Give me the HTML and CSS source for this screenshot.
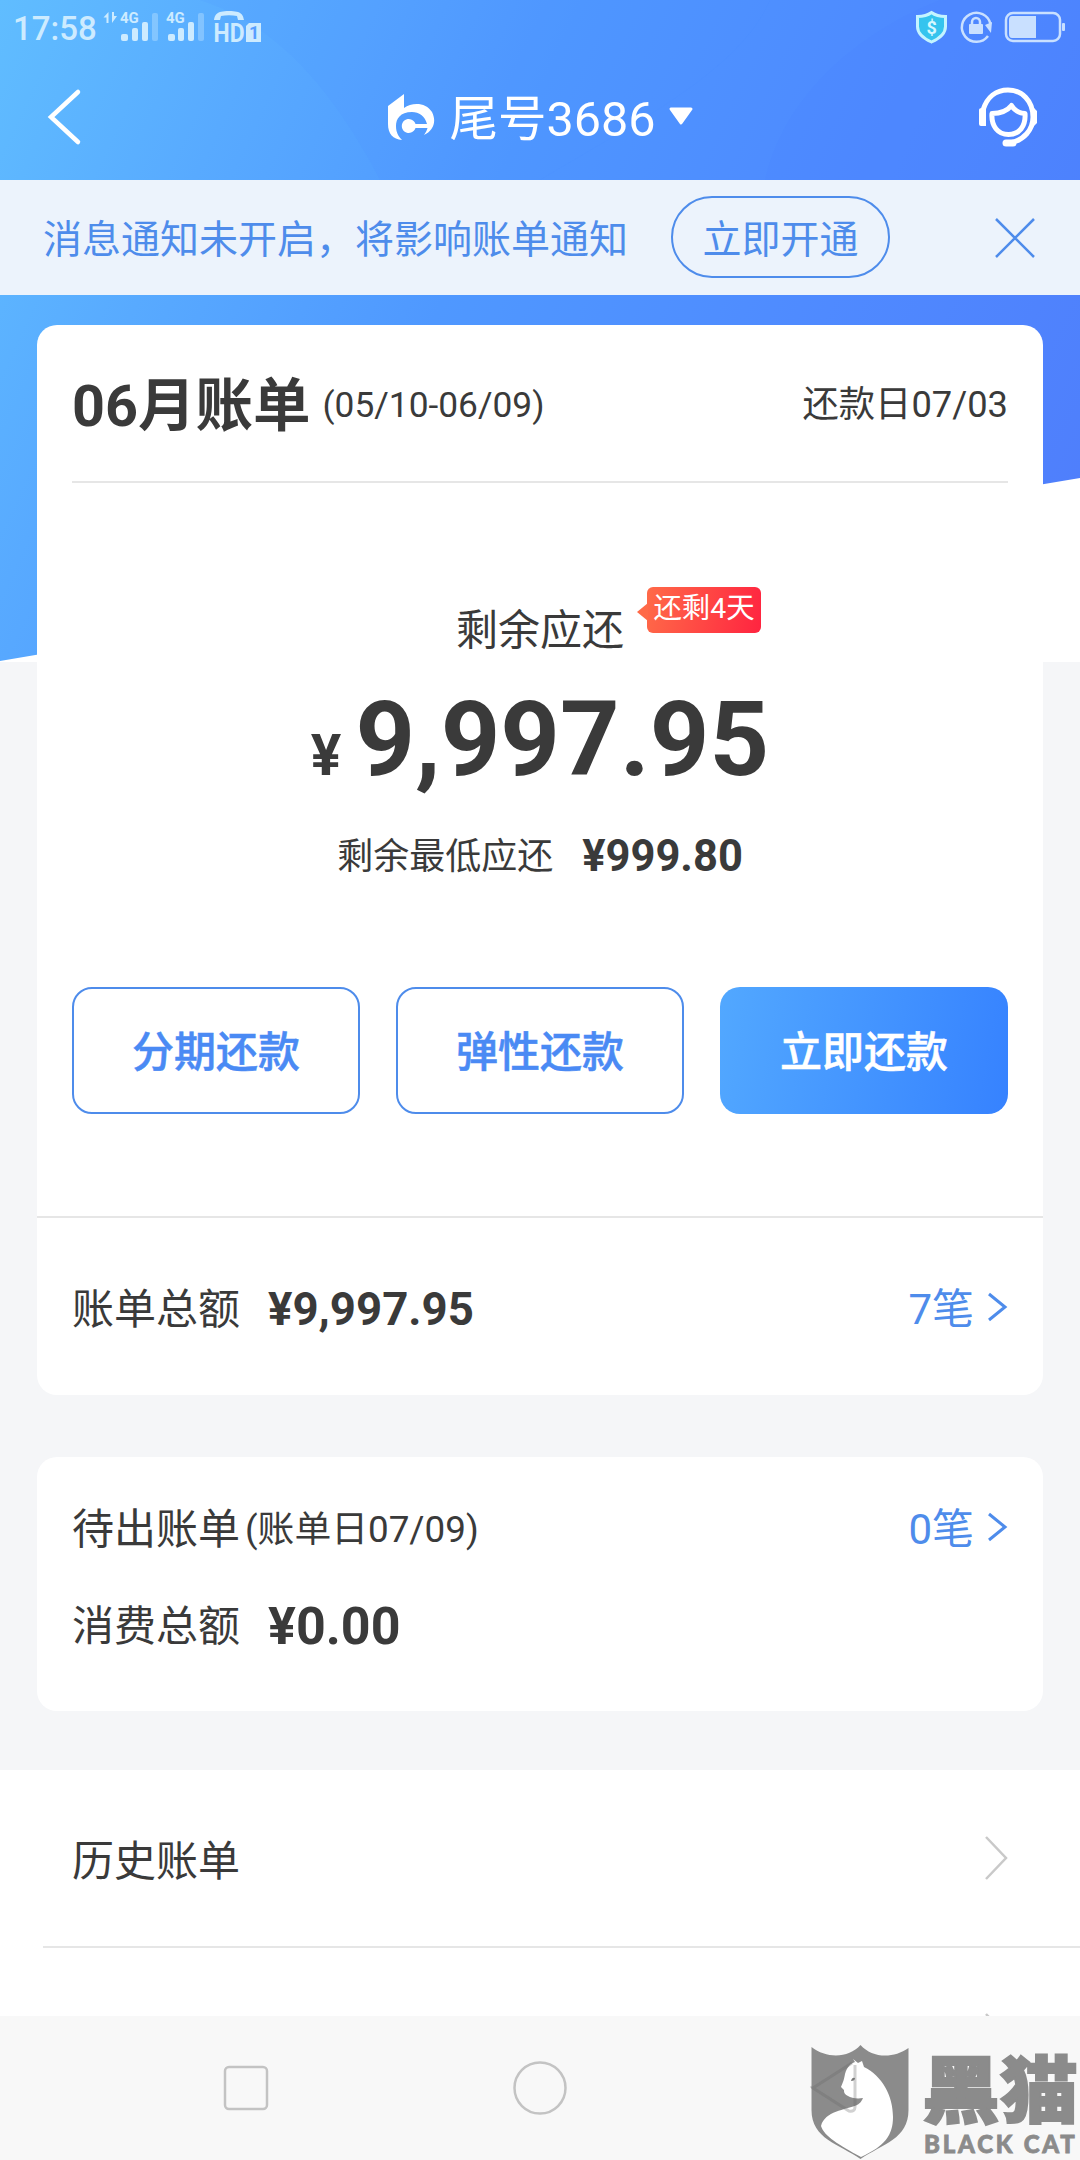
FILE: index.html
```html
<!DOCTYPE html>
<html lang="zh-CN">
<head>
<meta charset="utf-8">
<title>账单</title>
<link rel="stylesheet" href="styles.css">
</head>
<body>
<div class="screen">
  <div class="backdrop"></div>
  <div class="hero">
    <svg class="sheen" width="1080" height="180" viewBox="0 0 1080 180">
      <path d="M200 0C260 20 320 65 380 180H540C640 120 740 70 770 0z"/>
      <path d="M770 0C740 70 640 120 540 180H1080V0z"/>
      <path d="M940 0C840 40 780 110 765 180H1080V0z"/>
    </svg>
  </div>

  <header class="top">
    <div class="status">
      <span class="clock">17:58</span>
      <svg class="signals" width="160" height="52" viewBox="102 0 160 52">
        <path d="M103.500 17.500l5-5.500v11h-2v-5.500zM112 12v11l5-7h-3v-4z"/>
        <text x="120" y="23" class="net">4G</text>
        <rect x="121" y="34" width="7" height="7" rx="2"/>
        <rect x="132" y="28" width="6" height="13" rx="2"/>
        <rect x="142" y="22" width="6" height="19" rx="2"/>
        <rect class="dim" x="152" y="13" width="6" height="28" rx="2"/>
        <text x="166" y="23" class="net">4G</text>
        <rect x="168" y="34" width="7" height="7" rx="2"/>
        <rect x="178" y="28" width="6" height="13" rx="2"/>
        <rect x="188" y="22" width="6" height="19" rx="2"/>
        <rect class="dim" x="198" y="13" width="6" height="28" rx="2"/>
        <path d="M214 20c1-5 2-9 15-9s14 4 15 9h-6l-1-4c-5-1-11-1-16 0l-1 4z"/>
        <text x="213.500" y="41.500" class="hd" textLength="31" lengthAdjust="spacingAndGlyphs">HD</text>
        <path d="M249 23h12v19h-15V26z"/>
        <text x="249" y="39" class="sim">1</text>
      </svg>
      <svg class="tray" width="151" height="52" viewBox="914 0 151 52">
        <path class="shield" d="M931.500 12.500c4 3 9 4 14 4v10c0 7-6 12-14 15.500-8-3.500-14-8.500-14-15.500v-10c5 0 10-1 14-4z"/>
        <text x="926.500" y="34" class="dollar">$</text>
        <path class="ring" d="M988 36a14.500 14.500 0 1 1 2.500-12"/>
        <path d="M985 25l7-3-1 11z"/>
        <rect x="969" y="24" width="14" height="10" rx="1"/>
        <path class="ring" d="M972 25v-3a4 4 0 0 1 8 0v3"/>
        <rect class="cell" x="1006" y="13" width="54" height="28" rx="7"/>
        <path d="M1012 16h24v22h-24q-3 0-3-4V20q0-4 3-4z"/>
        <rect x="1062" y="23" width="3" height="8" rx="1"/>
      </svg>
    </div>
    <div class="navbar">
      <svg class="back" width="36" height="58" viewBox="0 0 36 58"><path d="M32 4L5 29l27 25"/></svg>
      <div class="account">
        <svg class="bank" width="48" height="48" viewBox="0 0 48 48">
          <path d="M0 12L16 0v14C24 8 38 8 44 18c5 10 1 19-8 23 2-3 3-5 3.500-7H27.500a7 7 0 1 1 0-4H39C37 22 31 18 24 18 12 18 8 25 8 32c0 6 2 10 6 14C5 45 0 40 0 30z"/>
        </svg>
        <span class="account-name">尾号3686</span>
        <svg class="caret" width="26" height="20" viewBox="0 0 26 20"><path d="M3 2h20L13 16z"/></svg>
      </div>
      <svg class="service" width="62" height="62" viewBox="0 0 62 62">
        <path d="M6 24C10 11 19 4 31 4c14 0 25 11 25 27 0 13-9 23-23 26"/>
        <path class="solid" d="M2 24q0-2 3-2h4v18H4q-2 0-2-2zM55 22h2l3 3v12l-4 4z"/>
        <path class="thick" d="M29 57h7"/>
        <path class="face" d="M15 27.500c7 0 14-1 19.500-8 3 5 7 7.500 13.500 8 1 13-6 21-16.500 21S14 40 15 27.500z"/>
      </svg>
    </div>
  </header>

  <section class="notice">
    <span class="notice-text">消息通知未开启，将影响账单通知</span>
    <span class="notice-btn">立即开通</span>
    <svg class="close" width="42" height="42" viewBox="0 0 42 42"><path d="M2 2l38 38M40 2L2 40"/></svg>
  </section>

  <main class="cards">
    <section class="card bill">
      <div class="bill-head">
        <span class="month">06月账单</span>
        <span class="small period">(05/10-06/09)</span>
        <span class="small due">还款日07/03</span>
      </div>
      <div class="summary">
        <div class="remain">剩余应还<span class="badge">还剩4天</span></div>
        <div class="amount"><span class="yen">¥</span>9,997.95</div>
        <div class="minimum"><span>剩余最低应还</span><b>¥999.80</b></div>
      </div>
      <div class="actions">
        <span class="btn">分期还款</span>
        <span class="btn">弹性还款</span>
        <span class="btn primary">立即还款</span>
      </div>
      <div class="row total">
        <span>账单总额</span><b class="value">¥9,997.95</b>
        <span class="link">7笔<svg width="22" height="30" viewBox="0 0 22 30"><path d="M3 2l16 13L3 28"/></svg></span>
      </div>
    </section>

    <section class="card pending">
      <div class="row">
        <span>待出账单</span><span class="small day">(账单日07/09)</span>
        <span class="link">0笔<svg width="22" height="30" viewBox="0 0 22 30"><path d="M3 2l16 13L3 28"/></svg></span>
      </div>
      <div class="row spend">
        <span>消费总额</span><b class="value big">¥0.00</b>
      </div>
    </section>
  </main>

  <section class="list">
    <div class="item"><span>历史账单</span><svg width="26" height="46" viewBox="0 0 26 46"><path d="M3 2l20 21L3 44"/></svg></div>
    <div class="item next"><svg width="26" height="46" viewBox="0 0 26 46"><path d="M3 2l20 21L3 44"/></svg></div>
  </section>

  <footer class="keys">
    <svg width="48" height="48" viewBox="0 0 48 48"><rect x="3" y="3" width="42" height="42" rx="4"/></svg>
    <svg width="56" height="56" viewBox="0 0 56 56"><circle cx="28" cy="28" r="25.500"/></svg>
    <svg width="48" height="56" viewBox="0 0 48 56"><path d="M42 3L3 27l35 23q5 2 5-3V8"/></svg>
  </footer>

  <div class="watermark">
    <svg width="98" height="116" viewBox="0 0 98 116">
      <path class="crest" d="M.5 2C16 14 38 13 49.500 0 61 13 82 14 97.500 3v62c0 29-26 34-48 49C28 99 .5 94 .5 65z"/>
      <path class="cat" d="M42 14l5 4 4-2 2 6c18 9 29 28 29 50 0 18-8 29-32 40C28 100 13 91 10 81c4-15 24-16 36-21 4-2 5-5 6-7-6 1-12 0-15-2-4-2-4-4-4-6l-3-3c2-5 3-7 4-13 2-7 5-10 10-12z"/>
      <path class="arrow" d="M41 18L2 43l36 23q6 1 6-4V20"/>
      <path class="eye" d="M40 36q1-4 4-3 0 3-4 3z"/>
    </svg>
    <div class="brand">
      <span class="brand-cn">黑猫</span>
      <span class="brand-en">BLACK CAT</span>
    </div>
  </div>
</div>
</body>
</html>
```
FILE: styles.css
```css
* { box-sizing: border-box; }
body { margin: 0; }

.screen {
  position: relative;
  width: 1080px;
  height: 2160px;
  overflow: hidden;
  display: flex;
  flex-direction: column;
  background: #f5f6f8;
  color: #3a3a3a;
  font-family: Roboto, "Noto Sans CJK SC", sans-serif;
  font-size: 42px;
  line-height: 60px;
  white-space: nowrap;
}
svg { display: block; flex: none; }

/* slanted blue area behind the header and the first card */
.backdrop {
  position: absolute;
  inset: 0 0 auto;
  height: 662px;
  background: #fff;
}
.hero {
  position: absolute;
  inset: 0 0 auto;
  height: 662px;
  background: linear-gradient(115deg, #60bdff 0%, #58aaff 20%, #4f98ff 42%, #4f8aff 70%, #4f7cfb 100%);
  clip-path: polygon(0 0, 100% 0, 100% 478px, 0 661px);
}
.sheen { fill: rgba(72, 124, 255, .06); }

.top { position: relative; height: 180px; }
.status { display: flex; height: 52px; padding: 0 15px 0 13px; }
.clock {
  width: 89px;
  color: #cdebff;
  font-size: 33px;
  line-height: 57px;
  font-weight: 500;
}
.signals { fill: #cdebff; }
.signals .dim { opacity: .35; }
.net { font: bold 15px Roboto, sans-serif; }
.hd { font: bold 25px Roboto, sans-serif; }
.sim { font: bold 18px Roboto, sans-serif; fill: #579fff; }
.tray { margin-left: auto; fill: #c9e0ff; }
.shield { fill: #35c4ee; stroke: #c4f4ff; stroke-width: 3; }
.dollar { font: bold 18px Roboto, sans-serif; fill: #d5f8ff; }
.ring, .cell { fill: none; stroke: #c9e0ff; stroke-width: 2.5; }

.navbar {
  display: flex;
  justify-content: space-between;
  align-items: center;
  height: 128px;
  padding: 2px 41px 0 46px;
  color: #fff;
}
.back { fill: none; stroke: #fff; stroke-width: 4.5; stroke-linecap: round; }
.account { display: flex; align-items: center; margin-left: 23px; padding-top: 5px; }
.bank, .caret { fill: #fff; }
.bank { margin-top: -3px; }
.caret { stroke: #fff; stroke-width: 3; stroke-linejoin: round; margin: -6px 0 0 12px; }
.account-name { font-size: 48.5px; margin-left: 13px; }
.service { fill: none; stroke: #fff; stroke-width: 5; }
.service .solid { fill: #fff; stroke: none; }
.service .thick { stroke-width: 7; stroke-linecap: round; }
.service .face { stroke-width: 5; stroke-linejoin: round; }

.notice {
  position: relative;
  display: flex;
  align-items: center;
  height: 115px;
  padding: 0 44px 0 43px;
  background: #ecf3fc;
  color: #4e8ceb;
  font-size: 39px;
}
.notice-text { padding-top: 4px; }
.notice-btn {
  width: 219px;
  height: 82px;
  margin: -1px 0 0 43px;
  border: 2px solid #4e8ceb;
  border-radius: 41px;
  line-height: 84px;
  text-align: center;
}
.close { margin-left: auto; fill: none; stroke: #4e8ceb; stroke-width: 2.5; }

.cards {
  position: relative;
  display: flex;
  flex-direction: column;
  gap: 62px;
  padding: 30px 37px 59px;
}
.card { background: #fff; border-radius: 20px; }
.small { font-size: 36px; }

.bill { height: 1070px; }
.bill-head {
  display: flex;
  align-items: center;
  height: 158px;
  margin: 0 35px;
  border-bottom: 2px solid #e6e6e6;
}
.month { padding-top: 7px; font-size: 57.5px; font-weight: 700; }
.period { margin-left: 12px; padding-top: 3px; font-size: 35.3px; }
.due { margin-left: auto; padding-top: 4px; font-size: 36.3px; }

.summary { height: 504px; padding-top: 118px; text-align: center; }
.remain { position: relative; width: 168px; margin: 0 auto; }
.badge {
  position: absolute;
  left: 191px;
  top: -14px;
  width: 114px;
  height: 46px;
  border-radius: 6px;
  background: linear-gradient(100deg, #ff6a48, #ff2440);
  color: #fff;
  font-size: 28.4px;
  line-height: 44px;
}
.badge::before {
  content: "";
  position: absolute;
  left: -10px;
  top: 16px;
  border: solid transparent;
  border-width: 9px 11px 9px 0;
  border-right-color: #ff6a48;
}
.amount {
  display: flex;
  align-items: baseline;
  justify-content: center;
  height: 120px;
  margin-top: 19px;
  font-size: 104px;
  line-height: 120px;
  font-weight: 700;
}
.yen { font-size: 57px; margin-right: 14px; }
.minimum {
  display: flex;
  align-items: center;
  justify-content: center;
  gap: 29px;
  margin-top: 27px;
  font-size: 36px;
}
.minimum b { font-size: 43.5px; }

.actions {
  display: grid;
  grid-template-columns: repeat(3, 1fr);
  gap: 36px;
  height: 229px;
  padding: 0 35px;
}
.btn {
  height: 127px;
  border: 2px solid #4e8ceb;
  border-radius: 20px;
  color: #4a8af4;
  font-weight: 500;
  line-height: 127px;
  text-align: center;
  -webkit-text-stroke: .5px currentColor;
}
.btn.primary { border: 0; color: #fff; line-height: 131px; background: linear-gradient(100deg, #52a8ff, #3682ff); }

.row { display: flex; align-items: center; padding: 0 35px; }
.total { height: 179px; padding-top: 7px; border-top: 2px solid #e6e6e6; }
.value { font-size: 45.6px; margin-left: 28px; }
.value.big { font-size: 52px; }
.day { margin-left: 5px; font-size: 36.8px; }
.link { display: flex; align-items: center; gap: 12px; margin-left: auto; color: #4e8ceb; }
.link svg { margin-top: -6px; fill: none; stroke: #4e8ceb; stroke-width: 3; }

.pending { height: 254px; padding-top: 43px; }
.spend { margin-top: 37px; }

.list { position: relative; height: 246px; background: #fff; overflow: hidden; }
.item {
  display: flex;
  align-items: center;
  justify-content: space-between;
  height: 178px;
  margin-left: 43px;
  padding: 0 71px 0 29px;
  border-bottom: 2px solid #e6e6e6;
}
.item span { padding-top: 7px; }
.item svg { fill: none; stroke: #c9c9c9; stroke-width: 2.5; }
.item.next { justify-content: flex-end; height: 176px; }

.keys {
  position: relative;
  display: flex;
  align-items: center;
  justify-content: space-between;
  height: 144px;
  padding: 0 223px 0 222px;
  background: #f8f8f8;
}
.keys svg { fill: none; stroke: #c3c3c3; stroke-width: 2.5; }

.watermark {
  position: absolute;
  left: 811px;
  top: 2045px;
  display: flex;
  gap: 13px;
  color: #8b8b8b;
}
.crest { fill: #8b8b8b; }
.cat { fill: #fff; }
.arrow { fill: none; stroke: #666; stroke-width: 3; opacity: .3; }
.eye { fill: #777; }
.brand { display: flex; flex-direction: column; }
.brand-cn {
  height: 82px;
  font: 900 78px/80px "Noto Sans CJK SC", sans-serif;
  transform: scaleY(.93);
  -webkit-text-stroke: 2px #8b8b8b;
}
.brand-en {
  margin: 3px 0 0 2px;
  font: 900 24px/28px Lato, sans-serif;
  letter-spacing: 2.8px;
  -webkit-text-stroke: .8px #8b8b8b;
}
```
